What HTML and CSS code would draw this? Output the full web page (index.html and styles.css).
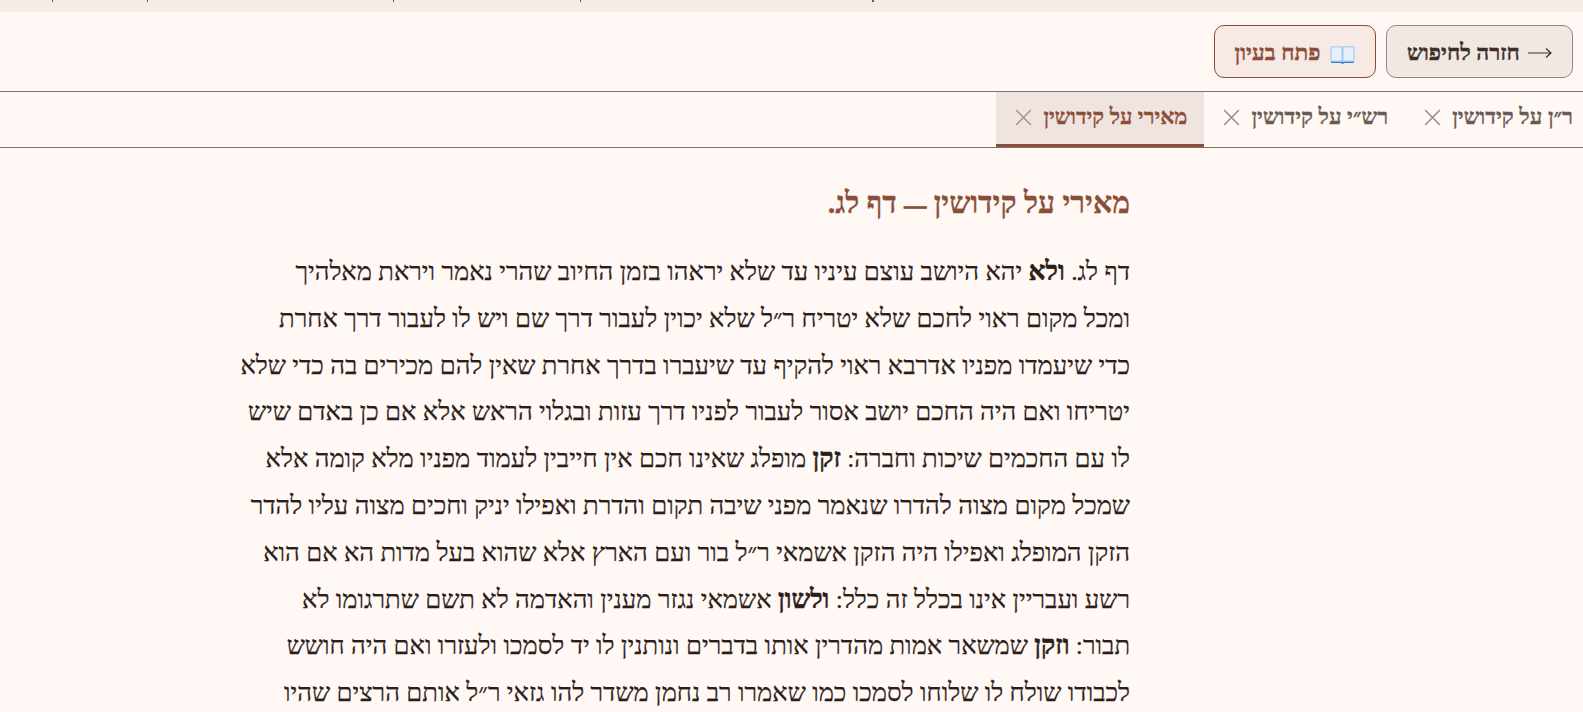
FILE: index.html
```html
<!DOCTYPE html>
<html lang="he" dir="rtl">
<head>
    <meta charset="UTF-8">
    <title>מאירי על קידושין</title>
    <link rel="stylesheet" href="styles.css">
</head>
<body>
    <div class="top-strip">
        <i class="tick t1"></i><i class="tick t2"></i><i class="tick t3"></i><i class="tick t4"></i><i class="tick t5"></i>
    </div>
    <header class="actions">
        <button class="btn btn-back">
            <svg class="arrow" viewBox="0 0 24 12"><path d="M0 6h23M18 1.500 23 6l-5 4.500" fill="none" stroke="#3e2f29" stroke-width="1.200"/></svg>
            חזרה לחיפוש
        </button>
        <button class="btn btn-open">
            <svg class="book" viewBox="0 0 26 22">
                <path d="M1 3h11.500v15H1z" fill="#e6f1fb" stroke="#93c3ec"/>
                <path d="M13.500 3H25v15H13.500z" fill="#e6f1fb" stroke="#93c3ec"/>
                <path d="M1 18.500h24V20H15l-2 1-2-1H1z" fill="#3585d2"/>
            </svg>
            פתח בעיון
        </button>
    </header>
    <nav class="tabs">
        <div class="tab">
            <span>ר״ן על קידושין</span>
            <svg class="close" viewBox="0 0 16 16"><path d="M1 1l14 14M15 1 1 15"/></svg>
        </div>
        <div class="tab">
            <span>רש״י על קידושין</span>
            <svg class="close" viewBox="0 0 16 16"><path d="M1 1l14 14M15 1 1 15"/></svg>
        </div>
        <div class="tab active">
            <span>מאירי על קידושין</span>
            <svg class="close" viewBox="0 0 16 16"><path d="M1 1l14 14M15 1 1 15"/></svg>
        </div>
    </nav>
    <main class="reader">
        <h2>מאירי על קידושין <span class="dash">—</span> דף לג.</h2>
        <p>
            דף לג. <b>ולא</b> יהא היושב עוצם עיניו עד שלא יראהו בזמן החיוב שהרי נאמר ויראת מאלהיך<br>
            ומכל מקום ראוי לחכם שלא יטריח ר״ל שלא יכוין לעבור דרך שם ויש לו לעבור דרך אחרת<br>
            כדי שיעמדו מפניו אדרבא ראוי להקיף עד שיעברו בדרך אחרת שאין להם מכירים בה כדי שלא<br>
            יטריחו ואם היה החכם יושב אסור לעבור לפניו דרך עזות ובגלוי הראש אלא אם כן באדם שיש<br>
            לו עם החכמים שיכות וחברה: <b>זקן</b> מופלג שאינו חכם אין חייבין לעמוד מפניו מלא קומה אלא<br>
            שמכל מקום מצוה להדרו שנאמר מפני שיבה תקום והדרת ואפילו יניק וחכים מצוה עליו להדר<br>
            הזקן המופלג ואפילו היה הזקן אשמאי ר״ל בור ועם הארץ אלא שהוא בעל מדות הא אם הוא<br>
            רשע ועבריין אינו בכלל זה כלל: <b>ולשון</b> אשמאי נגזר מענין והאדמה לא תשם שתרגומו לא<br>
            תבור: <b>וזקן</b> שמשאר אמות מהדרין אותו בדברים ונותנין לו יד לסמכו ולעזרו ואם היה חושש<br>
            לכבודו שולח לו שלוחו לסמכו כמו שאמרו רב נחמן משדר להו גזאי ר״ל אותם הרצים שהיו
        </p>
    </main>
</body>
</html>
```

FILE: styles.css
```css
html, body {
    height: 100%;
    overflow: hidden;
}

body {
    margin: 0;
    background: #fff8f5;
    color: #2b1d18;
    font-family: "Liberation Serif", serif;
}

.top-strip {
    position: relative;
    height: 12px;
    background: #f6ece7;
}

.tick {
    position: absolute;
    top: 0;
    width: 1px;
    height: 2px;
    background: #6b5a52;
}
.t1 { left: 52px; }
.t2 { left: 147px; }
.t3 { left: 393px; }
.t4 { left: 580px; }
.t5 { left: 872px; width: 2px; }

.actions {
    display: flex;
    gap: 10px;
    height: 80px;
    box-sizing: border-box;
    padding: 13px 10px 0;
    border-bottom: 1px solid #85736b;
}

.btn {
    display: flex;
    align-items: center;
    justify-content: center;
    height: 53px;
    padding: 2px 0 0;
    border-radius: 10px;
    font: bold 22.500px "Liberation Serif", serif;
    -webkit-text-stroke: 0.4px currentColor;
}

.btn-back {
    gap: 8px;
    width: 187px;
    background: #f0e8e3;
    border: 1px solid #95857d;
    color: #3e2f29;
}

.arrow {
    width: 24px;
    height: 12px;
}

.btn-open {
    gap: 10px;
    width: 162px;
    background: #f7e9e3;
    border: 1px solid #8a4b34;
    color: #8a4f39;
}

.book {
    width: 25px;
    height: 21px;
    margin-top: 3px;
}

.tabs {
    display: flex;
    height: 56px;
    box-sizing: border-box;
    margin-right: -7px;
    border-bottom: 1px solid #85736b;
}

.tab {
    display: flex;
    align-items: center;
    gap: 11px;
    padding: 0 17px 5px 19px;
    font-size: 22.300px;
    font-weight: bold;
    color: #6a5a52;
    -webkit-text-stroke: 0.3px currentColor;
}

.close {
    width: 17px;
    height: 17px;
    fill: none;
    stroke: #8f8782;
    stroke-width: 1.300;
}

.tab.active {
    font-size: 22px;
    background: #efe4df;
    color: #8a4f39;
    box-shadow: inset 0 -3px 0 #8a4f39;
}

.tab.active .close {
    stroke: #b08f82;
}

.reader {
    width: 900px;
    margin-right: 453px;
}

h2 {
    margin: 37px 0 28px;
    font-size: 30px;
    line-height: 36px;
    color: #8a4f39;
    -webkit-text-stroke: 0.3px currentColor;
}

.dash {
    font-size: 22px;
    line-height: 0;
    -webkit-text-stroke: 1px currentColor;
}

p {
    margin: 0;
    font-size: 25.600px;
    line-height: 46.800px;
    -webkit-text-stroke: 0.25px currentColor;
}

p b {
    font-size: 26.500px;
    line-height: 1;
    -webkit-text-stroke: 0.5px currentColor;
}
```
